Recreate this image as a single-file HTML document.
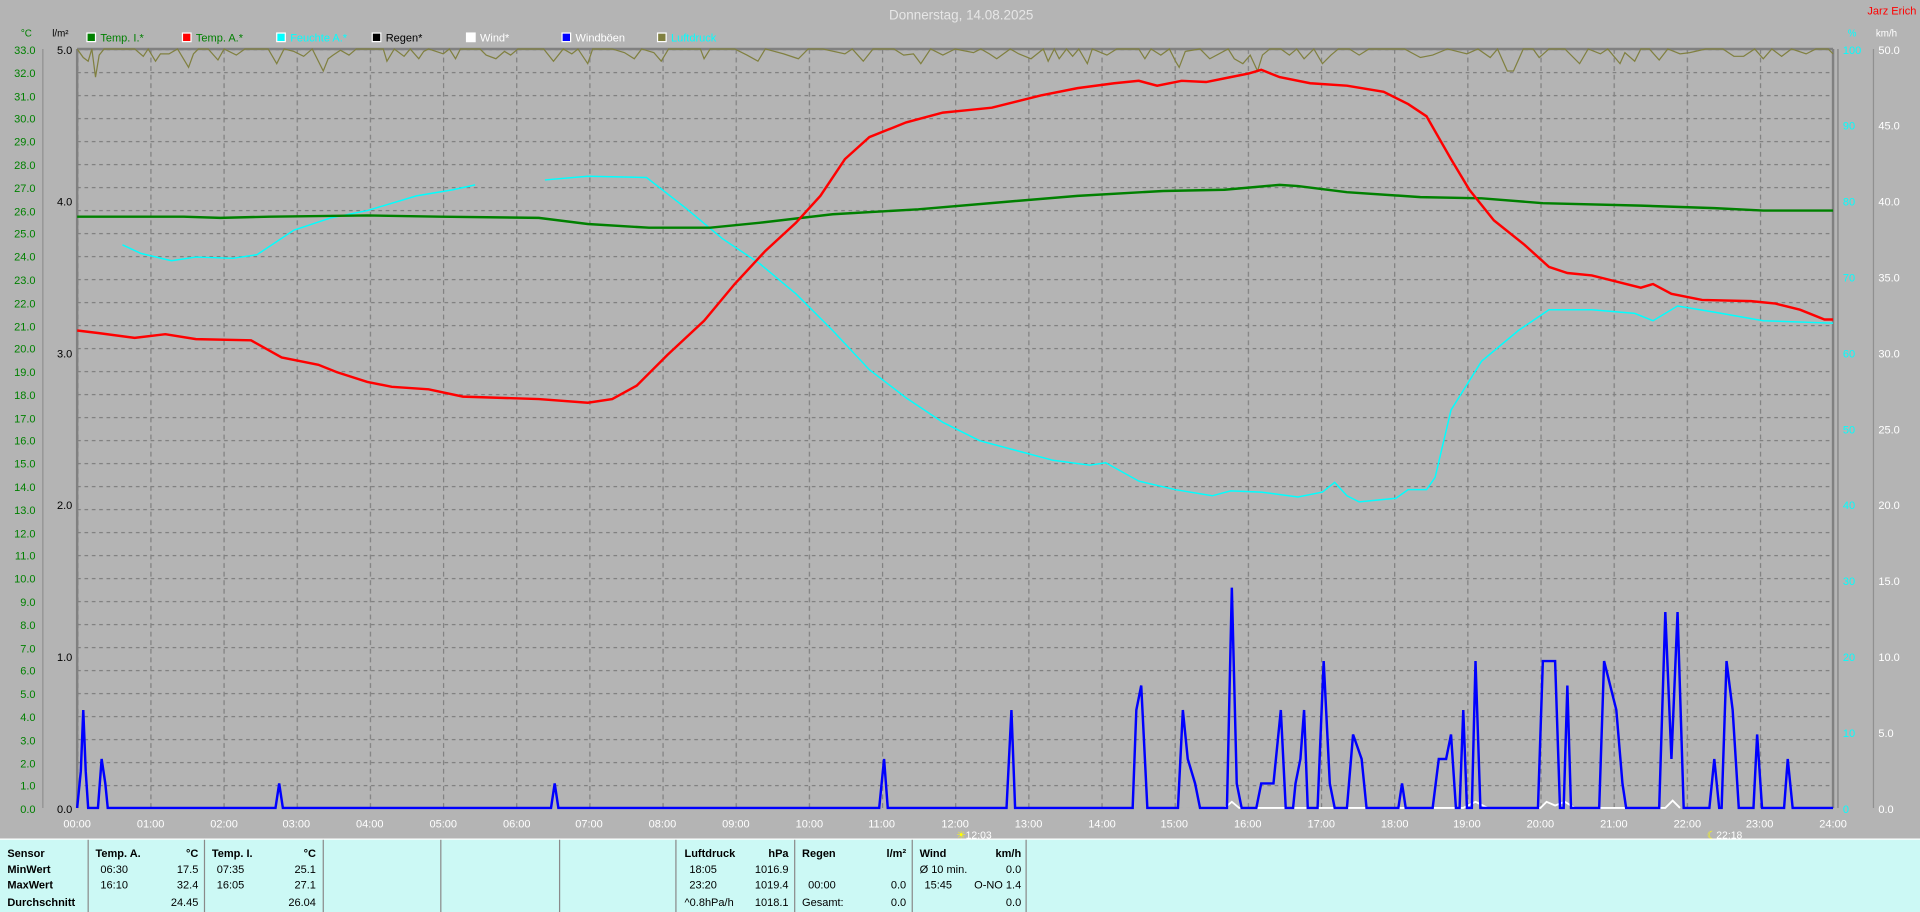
<!DOCTYPE html>
<html><head><meta charset="utf-8"><style>
html,body{margin:0;padding:0;background:#b4b4b4;width:1920px;height:912px;overflow:hidden}
svg{display:block}
text{font-family:"Liberation Sans",sans-serif;font-size:9px}
.g{fill:#008000;text-anchor:end}
.k{fill:#000;text-anchor:end}
.c{fill:#00ffff}
.w{fill:#fff}
.h{fill:#fff;text-anchor:middle}
.t{fill:#000;font-size:9px}
.b{font-weight:bold}
.r{text-anchor:end}
</style></head><body>
<svg width="1920" height="912" viewBox="0 0 1568 745" preserveAspectRatio="none" xmlns="http://www.w3.org/2000/svg">
<defs>
<pattern id="gh" x="63" y="40" width="1434" height="18.788" patternUnits="userSpaceOnUse">
<line x1="0" y1="0.5" x2="1434" y2="0.5" stroke="#808080" stroke-dasharray="3,3"/>
</pattern>
<pattern id="gv" x="63" y="40" width="59.75" height="620" patternUnits="userSpaceOnUse">
<line x1="0.5" y1="0" x2="0.5" y2="620" stroke="#808080" stroke-dasharray="4,3"/>
</pattern>
</defs>
<rect width="1568" height="745" fill="#b4b4b4"/>
<rect x="63" y="40" width="1434" height="620" fill="url(#gh)"/>
<rect x="63" y="40" width="1434" height="620" fill="url(#gv)"/>
<line x1="63" y1="40" x2="63" y2="660" stroke="#808080" stroke-width="2"/>
<line x1="63" y1="40" x2="1497" y2="40" stroke="#808080" stroke-width="2"/>
<line x1="1497" y1="40" x2="1497" y2="660" stroke="#808080" stroke-width="2"/>
<line x1="1501" y1="40" x2="1501" y2="660" stroke="#808080" stroke-width="1"/>
<line x1="35" y1="40" x2="35" y2="660" stroke="#909090"/>
<line x1="1530" y1="40" x2="1530" y2="660" stroke="#909090"/>
<text x="785" y="16" fill="#e6e6e6" text-anchor="middle" style="font-size:11px">Donnerstag, 14.08.2025</text>
<text x="1565" y="12" fill="#ff0000" text-anchor="end">Jarz Erich</text>
<text x="26" y="30" class="g" style="font-size:8px">°C</text>
<text x="56" y="30" class="k" style="font-size:8px">l/m²</text>
<text x="1509" y="30" class="c" style="font-size:8px">%</text>
<text x="1532" y="30" class="w" style="font-size:8px">km/h</text>
<rect x="71" y="27" width="7" height="7" fill="#008000" stroke="#fff"/><text x="82" y="34" fill="#008000">Temp. I.*</text>
<rect x="149" y="27" width="7" height="7" fill="#f00" stroke="#fff"/><text x="160" y="34" fill="#008000">Temp. A.*</text>
<rect x="226" y="27" width="7" height="7" fill="#0ff" stroke="#fff"/><text x="237" y="34" fill="#0ff">Feuchte A.*</text>
<rect x="304" y="27" width="7" height="7" fill="#000" stroke="#fff"/><text x="315" y="34" fill="#000">Regen*</text>
<rect x="381" y="27" width="7" height="7" fill="#fff" stroke="#fff"/><text x="392" y="34" fill="#fff">Wind*</text>
<rect x="459" y="27" width="7" height="7" fill="#00f" stroke="#fff"/><text x="470" y="34" fill="#fff">Windböen</text>
<rect x="537" y="27" width="7" height="7" fill="#808040" stroke="#fff"/><text x="548" y="34" fill="#0ff">Luftdruck</text>
<g class="g">
<text x="29" y="44">33.0</text><text x="29" y="63">32.0</text><text x="29" y="82">31.0</text><text x="29" y="100">30.0</text><text x="29" y="119">29.0</text><text x="29" y="138">28.0</text><text x="29" y="157">27.0</text><text x="29" y="176">26.0</text><text x="29" y="194">25.0</text><text x="29" y="213">24.0</text><text x="29" y="232">23.0</text><text x="29" y="251">22.0</text><text x="29" y="270">21.0</text><text x="29" y="288">20.0</text><text x="29" y="307">19.0</text><text x="29" y="326">18.0</text><text x="29" y="345">17.0</text><text x="29" y="363">16.0</text><text x="29" y="382">15.0</text><text x="29" y="401">14.0</text><text x="29" y="420">13.0</text><text x="29" y="439">12.0</text><text x="29" y="457">11.0</text><text x="29" y="476">10.0</text><text x="29" y="495">9.0</text><text x="29" y="514">8.0</text><text x="29" y="533">7.0</text><text x="29" y="551">6.0</text><text x="29" y="570">5.0</text><text x="29" y="589">4.0</text><text x="29" y="608">3.0</text><text x="29" y="627">2.0</text><text x="29" y="645">1.0</text><text x="29" y="664">0.0</text>
</g>
<g class="k">
<text x="59" y="44">5.0</text><text x="59" y="168">4.0</text><text x="59" y="292">3.0</text><text x="59" y="416">2.0</text><text x="59" y="540">1.0</text><text x="59" y="664">0.0</text>
</g>
<g class="c">
<text x="1505" y="44">100</text><text x="1505" y="106">90</text><text x="1505" y="168">80</text><text x="1505" y="230">70</text><text x="1505" y="292">60</text><text x="1505" y="354">50</text><text x="1505" y="416">40</text><text x="1505" y="478">30</text><text x="1505" y="540">20</text><text x="1505" y="602">10</text><text x="1505" y="664">0</text>
</g>
<g class="w">
<text x="1534" y="44">50.0</text><text x="1534" y="106">45.0</text><text x="1534" y="168">40.0</text><text x="1534" y="230">35.0</text><text x="1534" y="292">30.0</text><text x="1534" y="354">25.0</text><text x="1534" y="416">20.0</text><text x="1534" y="478">15.0</text><text x="1534" y="540">10.0</text><text x="1534" y="602">5.0</text><text x="1534" y="664">0.0</text>
</g>
<g class="h">
<text x="63" y="676">00:00</text><text x="123" y="676">01:00</text><text x="183" y="676">02:00</text><text x="242" y="676">03:00</text><text x="302" y="676">04:00</text><text x="362" y="676">05:00</text><text x="422" y="676">06:00</text><text x="481" y="676">07:00</text><text x="541" y="676">08:00</text><text x="601" y="676">09:00</text><text x="661" y="676">10:00</text><text x="720" y="676">11:00</text><text x="780" y="676">12:00</text><text x="840" y="676">13:00</text><text x="900" y="676">14:00</text><text x="959" y="676">15:00</text><text x="1019" y="676">16:00</text><text x="1079" y="676">17:00</text><text x="1139" y="676">18:00</text><text x="1198" y="676">19:00</text><text x="1258" y="676">20:00</text><text x="1318" y="676">21:00</text><text x="1378" y="676">22:00</text><text x="1437" y="676">23:00</text><text x="1497" y="676">24:00</text>
</g>
<text x="781" y="685" class="w" style="font-size:8.5px"><tspan fill="#ff0">☀</tspan>12:03</text>
<text x="1394" y="685" class="w" style="font-size:8.5px"><tspan fill="#ff0">☾</tspan>22:18</text>
<polyline fill="none" stroke="#808040" stroke-width="1" points="63,40 68,47 72,50 75,40 78,63 81,45 85,40 100,40 110,40 117,46 121,40 127,50 131,44 138,44 145,40 154,55 158,44 162,40 170,40 178,49 183,40 193,45 200,40 219,40 226,52 232,40 240,42 248,46 255,40 264,58 268,48 272,45 278,41 285,45 291,40 300,40 313,40 316,50 322,40 330,46 335,40 342,48 346,42 350,40 362,44 367,40 372,48 376,40 382,40 392,40 397,45 405,48 412,42 417,45 423,40 432,40 444,40 452,50 460,40 467,44 472,40 480,52 484,40 500,40 510,43 518,48 524,40 534,43 540,50 546,40 560,40 572,40 575,48 580,40 586,40 600,40 610,45 619,50 625,40 640,44 652,48 660,40 672,40 690,44 696,40 705,50 713,40 720,40 730,40 738,45 746,44 752,52 760,40 770,45 780,40 795,43 801,40 808,44 814,48 825,40 832,44 842,48 852,40 856,50 861,40 865,48 871,40 876,46 881,40 888,52 892,40 904,45 912,40 930,40 935,48 940,40 948,45 955,40 960,50 963,55 968,42 980,40 988,48 1003,40 1008,48 1015,52 1021,45 1027,58 1031,45 1037,40 1046,40 1053,45 1059,40 1065,48 1073,40 1080,52 1087,45 1093,40 1102,40 1110,45 1118,40 1130,40 1147,40 1160,47 1170,45 1182,40 1198,44 1207,40 1217,47 1223,40 1231,58 1236,58 1244,40 1252,40 1257,47 1265,40 1278,40 1290,52 1297,40 1307,44 1313,40 1323,52 1327,43 1335,50 1340,40 1347,40 1355,49 1362,40 1372,44 1380,43 1393,40 1407,40 1416,46 1424,46 1433,40 1440,48 1447,40 1455,46 1463,40 1475,44 1483,40 1493,40 1497,44"/>
<polyline fill="none" stroke="#00ffff" stroke-width="1.2" points="100,200 115,207 140,213 160,210 190,211 210,208 240,188 270,178 300,172 340,160 370,155 388,151"/>
<polyline fill="none" stroke="#00ffff" stroke-width="1.2" points="445,147 480,144 528,145 560,170 590,195 620,215 650,240 680,270 710,302 740,325 770,345 800,360 830,368 860,376 890,380 903,378 930,393 960,400 990,405 1005,401 1030,402 1060,406 1080,402 1090,394 1100,405 1110,410 1140,407 1150,400 1165,400 1172,390 1185,335 1210,295 1240,270 1265,253 1300,253 1335,256 1350,262 1370,250 1400,255 1440,262 1497,264"/>
<polyline fill="none" stroke="#008000" stroke-width="2" points="63,177 150,177 180,178 220,177 300,176 360,177 440,178 480,183 530,186 580,186 620,182 680,175 750,171 820,165 880,160 950,156 1000,155 1045,151 1060,152 1100,157 1160,161 1210,162 1260,166 1340,168 1400,170 1440,172 1497,172"/>
<polyline fill="none" stroke="#ff0000" stroke-width="2" points="63,270 80,272 110,276 135,273 160,277 205,278 230,292 260,298 275,304 300,312 320,316 350,318 378,324 440,326 480,329 500,326 520,315 545,290 575,262 600,232 625,205 650,182 670,160 690,130 710,112 740,100 770,92 790,90 810,88 830,83 850,78 880,72 910,68 930,66 945,70 965,66 985,67 1005,63 1020,60 1030,57 1045,63 1070,68 1100,70 1130,75 1150,85 1165,95 1185,130 1200,155 1220,180 1245,200 1265,218 1280,223 1300,225 1320,230 1340,235 1350,232 1365,240 1390,245 1430,246 1450,248 1470,253 1490,261 1497,261"/>
<polyline fill="none" stroke="#fff" stroke-width="1.5" points="1000,660 1006,655 1012,660 1195,660 1205,655 1215,660 1258,660 1263,655 1270,658 1278,655 1286,660 1360,660 1366,654 1372,660"/>
<polyline fill="none" stroke="#0000ff" stroke-width="2" points="63,660 66,630 68,580 70,630 72,660 80,660 83,620 86,640 88,660 225,660 228,640 231,660 450,660 453,640 456,660 718,660 722,620 725,660 822,660 826,580 829,660 925,660 928,580 932,560 935,620 937,660 962,660 966,580 970,620 976,640 980,660 1002,660 1006,480 1010,640 1014,660 1026,660 1030,640 1040,640 1046,580 1050,660 1056,660 1058,640 1062,620 1065,580 1068,660 1076,660 1081,540 1086,640 1090,660 1100,660 1105,600 1112,620 1116,660 1142,660 1145,640 1148,660 1170,660 1175,620 1181,620 1185,600 1189,660 1192,660 1195,580 1198,660 1202,660 1205,540 1209,660 1256,660 1260,540 1270,540 1274,660 1277,660 1280,560 1283,660 1306,660 1310,540 1320,580 1325,640 1328,660 1355,660 1360,500 1365,620 1370,500 1375,660 1396,660 1400,620 1404,660 1406,660 1410,540 1415,580 1420,660 1432,660 1435,600 1439,660 1457,660 1460,620 1464,660 1497,660"/>
<rect x="0" y="685" width="1568" height="60" fill="#ccf9f5"/>
<line x1="0" y1="685.5" x2="1568" y2="685.5" stroke="#fff"/>
<g stroke="#8a8a8a">
<line x1="72" y1="686" x2="72" y2="745"/><line x1="167" y1="686" x2="167" y2="745"/><line x1="264" y1="686" x2="264" y2="745"/><line x1="360" y1="686" x2="360" y2="745"/><line x1="457" y1="686" x2="457" y2="745"/><line x1="552" y1="686" x2="552" y2="745"/><line x1="649" y1="686" x2="649" y2="745"/><line x1="745" y1="686" x2="745" y2="745"/><line x1="838" y1="686" x2="838" y2="745"/>
</g>
<g class="t">
<text x="6" y="700" class="b">Sensor</text><text x="6" y="713" class="b">MinWert</text><text x="6" y="726" class="b">MaxWert</text><text x="6" y="740" class="b">Durchschnitt</text>
<text x="78" y="700" class="b">Temp. A.</text><text x="162" y="700" class="b r">°C</text>
<text x="82" y="713">06:30</text><text x="162" y="713" class="r">17.5</text>
<text x="82" y="726">16:10</text><text x="162" y="726" class="r">32.4</text>
<text x="162" y="740" class="r">24.45</text>
<text x="173" y="700" class="b">Temp. I.</text><text x="258" y="700" class="b r">°C</text>
<text x="177" y="713">07:35</text><text x="258" y="713" class="r">25.1</text>
<text x="177" y="726">16:05</text><text x="258" y="726" class="r">27.1</text>
<text x="258" y="740" class="r">26.04</text>
<text x="559" y="700" class="b">Luftdruck</text><text x="644" y="700" class="b r">hPa</text>
<text x="563" y="713">18:05</text><text x="644" y="713" class="r">1016.9</text>
<text x="563" y="726">23:20</text><text x="644" y="726" class="r">1019.4</text>
<text x="559" y="740">^0.8hPa/h</text><text x="644" y="740" class="r">1018.1</text>
<text x="655" y="700" class="b">Regen</text><text x="740" y="700" class="b r">l/m²</text>
<text x="660" y="726">00:00</text><text x="740" y="726" class="r">0.0</text>
<text x="655" y="740">Gesamt:</text><text x="740" y="740" class="r">0.0</text>
<text x="751" y="700" class="b">Wind</text><text x="834" y="700" class="b r">km/h</text>
<text x="751" y="713">Ø 10 min.</text><text x="834" y="713" class="r">0.0</text>
<text x="755" y="726">15:45</text><text x="834" y="726" class="r">O-NO 1.4</text>
<text x="834" y="740" class="r">0.0</text>
</g>
</svg>
</body></html>
